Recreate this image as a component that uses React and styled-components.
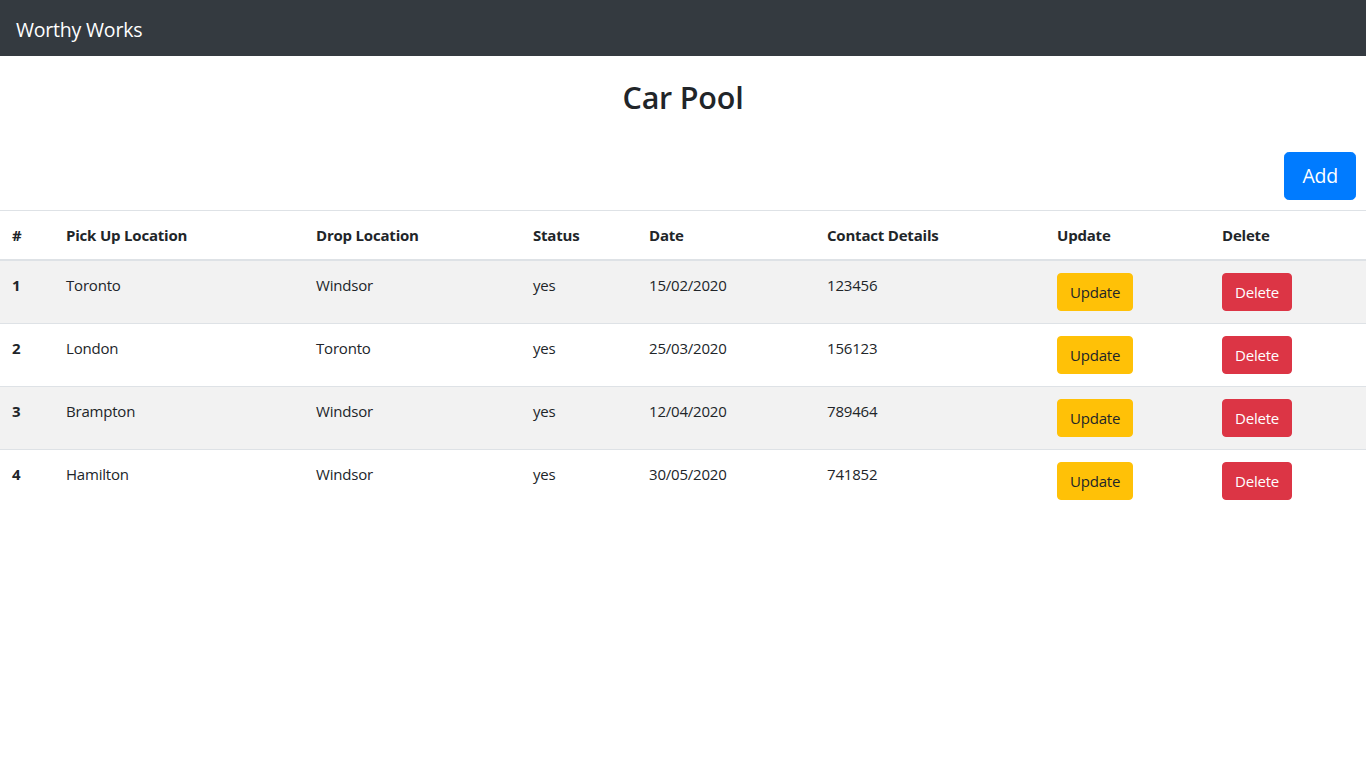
import React from "react";
import styled, { createGlobalStyle } from "styled-components";

const Global = createGlobalStyle`
  * { box-sizing: border-box; }
  body {
    margin: 0;
    font-family: "Open Sans", "Noto Sans", sans-serif;
    font-size: 15px;
    line-height: 24px;
    letter-spacing: -0.2px;
    color: #212529;
    background: #fff;
  }
`;

const Navbar = styled.nav`
  height: 56px;
  background: #343a40;
  display: flex;
  align-items: center;
  padding: 3px 16px 0;
`;

const Brand = styled.span`
  color: #fff;
  font-size: 19.5px;
  line-height: 30px;
`;

const Title = styled.h2`
  margin: 22px 0 0;
  font-size: 30.5px;
  font-weight: 600;
  line-height: 38px;
  text-align: center;
`;

const Toolbar = styled.div`
  display: flex;
  justify-content: flex-end;
  padding: 0 10px 10px;
  margin-top: 36px;
`;

const Button = styled.button`
  font-family: inherit;
  letter-spacing: -0.2px;
  border: 1px solid transparent;
  border-radius: ${(p) => (p.$lg ? "4.8px" : "4px")};
  padding: ${(p) => (p.$lg ? "8px 17px" : "6px 12px")};
  font-size: ${(p) => (p.$lg ? "19.5px" : "15px")};
  line-height: ${(p) => (p.$lg ? "30px" : "24px")};
  cursor: pointer;
  background: ${(p) => p.$bg};
  color: ${(p) => p.$fg};
  border-color: ${(p) => p.$bg};
`;

const Table = styled.table`
  width: 100%;
  border-collapse: collapse;
  table-layout: fixed;
`;

const Th = styled.th`
  text-align: left;
  font-weight: 700;
  padding: 12px;
  vertical-align: bottom;
  border-top: 1px solid #dee2e6;
  border-bottom: 2px solid #dee2e6;
`;

const Row = styled.tr`
  background: ${(p) => (p.$striped ? "rgba(0,0,0,0.05)" : "transparent")};
`;

const Td = styled.td`
  padding: 12px;
  vertical-align: top;
  border-top: 1px solid #dee2e6;
  font-weight: ${(p) => (p.$bold ? 700 : 400)};
`;

const widths = [54, 250, 217, 116, 178, 230, 165, 156];
const headers = ["#", "Pick Up Location", "Drop Location", "Status", "Date", "Contact Details", "Update", "Delete"];

const rows = [
  ["1", "Toronto", "Windsor", "yes", "15/02/2020", "123456"],
  ["2", "London", "Toronto", "yes", "25/03/2020", "156123"],
  ["3", "Brampton", "Windsor", "yes", "12/04/2020", "789464"],
  ["4", "Hamilton", "Windsor", "yes", "30/05/2020", "741852"],
];

export default function App() {
  return (
    <>
      <Global />
      <Navbar>
        <Brand>Worthy Works</Brand>
      </Navbar>
      <Title>Car Pool</Title>
      <Toolbar>
        <Button $lg $bg="#007bff" $fg="#fff">Add</Button>
      </Toolbar>
      <Table>
        <colgroup>
          {widths.map((w, i) => (
            <col key={i} style={{ width: w }} />
          ))}
        </colgroup>
        <thead>
          <tr>
            {headers.map((h) => (
              <Th key={h}>{h}</Th>
            ))}
          </tr>
        </thead>
        <tbody>
          {rows.map((r, i) => (
            <Row key={r[0]} $striped={i % 2 === 0}>
              {r.map((c, j) => (
                <Td key={j} $bold={j === 0}>{c}</Td>
              ))}
              <Td>
                <Button $bg="#ffc107" $fg="#212529">Update</Button>
              </Td>
              <Td>
                <Button $bg="#dc3545" $fg="#fff">Delete</Button>
              </Td>
            </Row>
          ))}
        </tbody>
      </Table>
    </>
  );
}
